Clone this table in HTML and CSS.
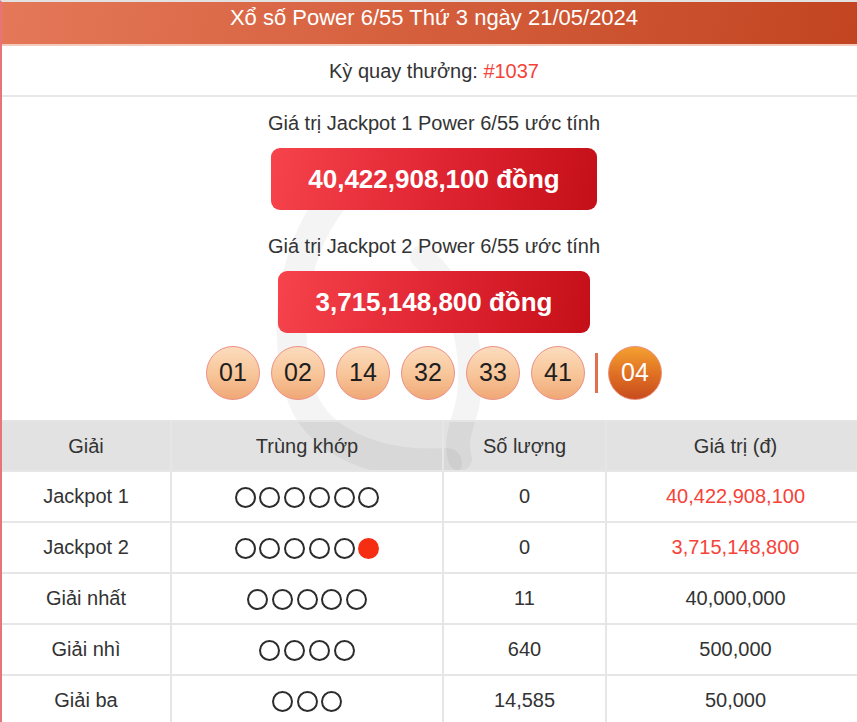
FILE: index.html
```html
<!DOCTYPE html>
<html lang="vi">
<head>
<meta charset="utf-8">
<title>Xổ số Power 6/55</title>
<link rel="stylesheet" href="styles.css">
</head>
<body>
<div class="box">
  <div class="title">Xổ số Power 6/55 Thứ 3 ngày 21/05/2024</div>
  <div class="draw">Kỳ quay thưởng: <span class="red">#1037</span></div>
  <div class="main">
    <svg class="watermark" width="866" height="380" viewBox="0 0 866 380" aria-hidden="true">
      <g fill="none" stroke="#000" stroke-opacity="0.045" stroke-linecap="round">
        <path d="M335 18 C292 68 278 150 300 220 C318 268 380 290 445 286" stroke-width="30"/>
        <path d="M420 80 C468 120 476 200 462 240 C456 258 454 270 458 282" stroke-width="24"/>
      </g>
    </svg>
    <div class="jp-label">Giá trị Jackpot 1 Power 6/55 ước tính</div>
    <div class="jp-value">40,422,908,100 đồng</div>
    <div class="jp-label second">Giá trị Jackpot 2 Power 6/55 ước tính</div>
    <div class="jp-value">3,715,148,800 đồng</div>
    <div class="balls">
      <span class="ball">01</span>
      <span class="ball">02</span>
      <span class="ball">14</span>
      <span class="ball">32</span>
      <span class="ball">33</span>
      <span class="ball">41</span>
      <span class="sep"></span>
      <span class="ball power">04</span>
    </div>
    <table class="prizes">
      <thead>
        <tr><th class="c1">Giải</th><th class="c2">Trùng khớp</th><th class="c3">Số lượng</th><th class="c4">Giá trị (đ)</th></tr>
      </thead>
      <tbody>
        <tr><td>Jackpot 1</td><td><span class="o"></span><span class="o"></span><span class="o"></span><span class="o"></span><span class="o"></span><span class="o"></span></td><td>0</td><td class="red">40,422,908,100</td></tr>
        <tr><td>Jackpot 2</td><td><span class="o"></span><span class="o"></span><span class="o"></span><span class="o"></span><span class="o"></span><span class="o dot"></span></td><td>0</td><td class="red">3,715,148,800</td></tr>
        <tr><td>Giải nhất</td><td><span class="o"></span><span class="o"></span><span class="o"></span><span class="o"></span><span class="o"></span></td><td>11</td><td>40,000,000</td></tr>
        <tr><td>Giải nhì</td><td><span class="o"></span><span class="o"></span><span class="o"></span><span class="o"></span></td><td>640</td><td>500,000</td></tr>
        <tr><td>Giải ba</td><td><span class="o"></span><span class="o"></span><span class="o"></span></td><td>14,585</td><td>50,000</td></tr>
      </tbody>
    </table>
  </div>
</div>
</body>
</html>
```

FILE: styles.css
```css
html, body {
  margin: 0;
  padding: 0;
  background: #fff;
  overflow: hidden;
}
body {
  font-family: "Liberation Sans", Arial, sans-serif;
  color: #333;
  width: 857px;
}
.box {
  width: 864px;
  border-left: 2px solid #e8737b;
  border-top: 2px solid #e2e2e2;
  background: #fff;
}
.title {
  height: 44px;
  box-sizing: border-box;
  padding-top: 3px;
  line-height: 26px;
  text-align: center;
  color: #fff;
  font-size: 22px;
  background: linear-gradient(100deg, #e47858 0%, #d45e3c 50%, #c24420 100%);
  border-bottom: 2px solid #f2cbbd;
}
.draw {
  height: 49px;
  line-height: 50px;
  text-align: center;
  font-size: 20px;
  color: #333;
  border-bottom: 2px solid #e8e8e8;
}
.red { color: #f5433a; }
.main {
  position: relative;
  display: flex;
  flex-direction: column;
  align-items: center;
}
.watermark {
  position: absolute;
  left: 0;
  top: 80px;
  pointer-events: none;
}
.jp-label {
  position: relative;
  font-size: 20px;
  line-height: 24px;
  margin-top: 14px;
  color: #333;
}
.jp-label.second { margin-top: 24px; }
.jp-value {
  position: relative;
  margin-top: 13px;
  height: 62px;
  line-height: 62px;
  padding: 0 37px;
  border-radius: 9px;
  color: #fff;
  font-weight: bold;
  font-size: 26px;
  background: linear-gradient(100deg, #f6434c 0%, #de2330 55%, #c40f18 100%);
}
.balls {
  position: relative;
  display: flex;
  align-items: center;
  gap: 11px;
  margin-top: 12px;
  height: 55px;
}
.ball {
  width: 54px;
  height: 54px;
  box-sizing: border-box;
  border: 1.5px solid #ec8f86;
  border-radius: 50%;
  background: linear-gradient(180deg, #fcdcbd 0%, #f7c497 55%, #f0a776 100%);
  display: flex;
  align-items: center;
  justify-content: center;
  font-size: 25px;
  color: #1e1e1e;
}
.ball.power {
  background: linear-gradient(180deg, #f4a030 0%, #de6e22 55%, #c74c1e 100%);
  border-color: #ec8c7a;
  color: #fff;
}
.sep {
  width: 3px;
  height: 40px;
  background: #e2704e;
  margin: 0 -1px;
}
.prizes {
  position: relative;
  margin-top: 20px;
  width: 864px;
  border-collapse: collapse;
  border-top: 2px solid #e4e4e4;
  font-size: 20px;
  color: #333;
}
.prizes th, .prizes td {
  text-align: center;
  border: 2px solid #e6e6e6;
  padding: 0;
  font-weight: normal;
}
.prizes tr:first-child th { border-top: none; }
.prizes th:first-child, .prizes td:first-child { border-left: none; }
.prizes thead tr {
  height: 50px;
  background: rgba(0, 0, 0, 0.115);
}
.prizes tbody tr {
  height: 51px;
  background: #fff;
}
.c1 { width: 168px; }
.c2 { width: 270px; }
.c3 { width: 161px; }
.o {
  display: inline-block;
  width: 21px;
  height: 21px;
  box-sizing: border-box;
  border: 2px solid #2c2c2c;
  border-radius: 50%;
  margin: 0 1.9px;
  vertical-align: middle;
}
.o.dot {
  background: #f52d12;
  border-color: #f52d12;
}
```
